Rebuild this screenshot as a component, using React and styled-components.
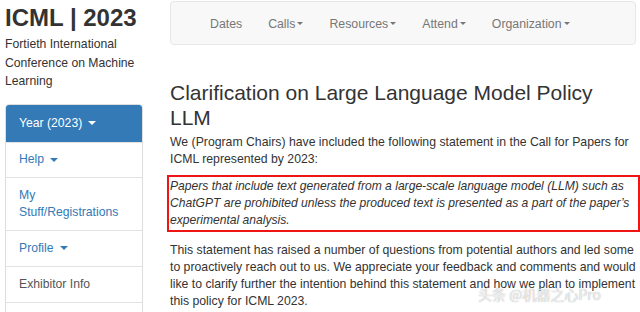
import React from "react";
import styled, { createGlobalStyle } from "styled-components";

const Global = createGlobalStyle`
  html, body { margin: 0; padding: 0; background: #fff; }
  body { font-family: "Liberation Sans", Arial, sans-serif; color: #333; overflow: hidden; }
  * { box-sizing: border-box; }
`;

const Page = styled.div`
  position: relative;
  width: 640px;
  height: 312px;
  overflow: hidden;
  display: grid;
  grid-template-columns: 138px 1fr;
  column-gap: 27px;
  padding-left: 5px;
`;

const Sidebar = styled.aside`
  display: flex;
  flex-direction: column;
`;

const Brand = styled.h1`
  margin: 4px 0 0;
  font-size: 24px;
  line-height: 28px;
  font-weight: bold;
  color: #333;
`;

const Tagline = styled.p`
  margin: 3px 0 0;
  font-size: 12.2px;
  line-height: 18.5px;
  color: #333;
`;

const SideNav = styled.ul`
  list-style: none;
  margin: 13px 0 0;
  padding: 0;
  border: 1px solid #ddd;
  border-radius: 4px;
`;

const SideItem = styled.li`
  padding: 0 13px;
  font-size: 12.2px;
  line-height: 17px;
  height: ${(p) => p.$h}px;
  display: flex;
  align-items: center;
  background: ${(p) => (p.$active ? "#337ab7" : "#fff")};
  color: ${(p) => (p.$active ? "#fff" : p.$plain ? "#555" : "#337ab7")};
  border-top: ${(p) => (p.$first ? "none" : "1px solid #e3e3e3")};
  border-radius: ${(p) => (p.$first ? "3px 3px 0 0" : "0")};
`;

const Caret = styled.span`
  display: inline-block;
  width: 0;
  height: 0;
  margin-left: ${(p) => p.$gap}px;
  vertical-align: middle;
  border-top: ${(p) => p.$size}px solid currentColor;
  border-left: ${(p) => p.$size}px solid transparent;
  border-right: ${(p) => p.$size}px solid transparent;
`;

const Main = styled.main`
  display: flex;
  flex-direction: column;
`;

const NavBar = styled.nav`
  margin: 1px 4px 0 0;
  height: 44px;
  background: #f8f8f8;
  border: 1px solid #e7e7e7;
  border-radius: 4px;
  display: flex;
  align-items: center;
  padding: 1px 0 0 26px;
`;

const NavLink = styled.span`
  padding: 0 13px;
  font-size: 12.3px;
  color: #777;
  display: flex;
  align-items: center;
`;

const Heading = styled.h2`
  margin: 35px 0 0;
  padding-right: 6px;
  font-size: 21px;
  line-height: 25px;
  font-weight: normal;
  color: #333;
`;

const Para = styled.p`
  margin: ${(p) => p.$mt}px 0 0;
  font-size: 12.25px;
  line-height: 17px;
  color: #333;
`;

const Quote = styled.blockquote`
  margin: 7px 0 0 -3px;
  padding: 1px 0 1px 1px;
  border: 2px solid #f01515;
  font-style: italic;
  font-size: 12.1px;
  line-height: 17px;
  color: #333;
`;

const Watermark = styled.span`
  position: absolute;
  left: 478px;
  top: 284px;
  font-family: "Noto Sans CJK SC", sans-serif;
  font-size: 14px;
  line-height: 20px;
  color: rgba(255, 255, 255, 0.8);
  text-shadow: 0 0 1px rgba(110, 110, 110, 0.7);
  pointer-events: none;
`;

const navItems = [
  { label: "Dates" },
  { label: "Calls", caret: true },
  { label: "Resources", caret: true },
  { label: "Attend", caret: true },
  { label: "Organization", caret: true },
];

export default function App() {
  return (
    <>
      <Global />
      <Page>
        <Sidebar>
          <Brand>ICML | 2023</Brand>
          <Tagline>Fortieth International Conference on Machine Learning</Tagline>
          <SideNav>
            <SideItem $first $active $h={37}>
              Year (2023)<Caret $gap={6} $size={4} />
            </SideItem>
            <SideItem $h={35}>
              Help<Caret $gap={6} $size={4} />
            </SideItem>
            <SideItem $h={53}>My Stuff/Registrations</SideItem>
            <SideItem $h={36}>
              Profile<Caret $gap={6} $size={4} />
            </SideItem>
            <SideItem $plain $h={36}>Exhibitor Info</SideItem>
            <SideItem $h={36}>&nbsp;</SideItem>
          </SideNav>
        </Sidebar>
        <Main>
          <NavBar>
            {navItems.map((n) => (
              <NavLink key={n.label}>
                {n.label}
                {n.caret && <Caret $gap={2} $size={3.5} />}
              </NavLink>
            ))}
          </NavBar>
          <Heading>Clarification on Large Language Model Policy LLM</Heading>
          <Para $mt={4}>
            We (Program Chairs) have included the following statement in the Call for Papers for ICML
            represented by 2023:
          </Para>
          <Quote>
            Papers that include text generated from a large-scale language model (LLM) such as
            ChatGPT are prohibited unless the produced text is presented as a part of the paper’s
            experimental analysis.
          </Quote>
          <Para $mt={10}>
            This statement has raised a number of questions from potential authors and led some to
            proactively reach out to us. We appreciate your feedback and comments and would like to
            clarify further the intention behind this statement and how we plan to implement this
            policy for ICML 2023.
          </Para>
        </Main>
        <Watermark>头条 @机器之心Pro</Watermark>
      </Page>
    </>
  );
}
